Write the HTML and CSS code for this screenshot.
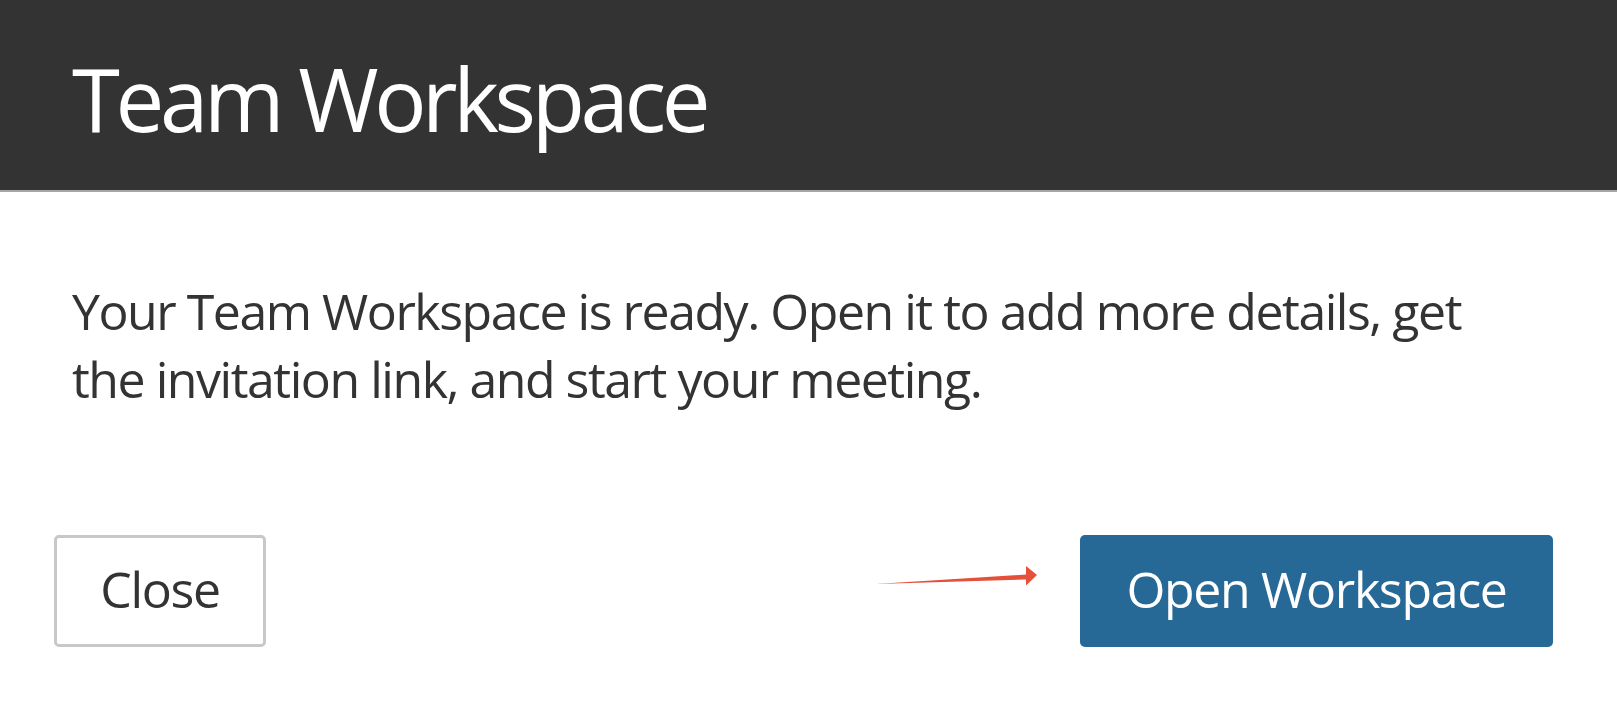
FILE: index.html
```html
<!DOCTYPE html>
<html lang="en">
<head>
<meta charset="utf-8">
<title>Team Workspace</title>
<link rel="stylesheet" href="styles.css">
</head>
<body>
<div class="dialog">
  <header class="dialog-header">
    <h1 class="dialog-title">Team Workspace</h1>
  </header>
  <main class="dialog-body">
    <p class="message">Your Team Workspace is ready. Open it to add more details, get the invitation link, and start your meeting.</p>
  </main>
  <footer class="dialog-footer">
    <button class="btn btn-secondary">Close</button>
    <div class="primary-wrap">
      <svg class="arrow" width="170" height="24" viewBox="0 0 170 24" aria-hidden="true">
        <polygon points="0,18 150,8.5 150,0 161,9 150,19.5 150,13.5" fill="#e4503a"/>
      </svg>
      <button class="btn btn-primary">Open Workspace</button>
    </div>
  </footer>
</div>
</body>
</html>
```

FILE: styles.css
```css
html, body {
  margin: 0;
  padding: 0;
  background: #ffffff;
}

body {
  font-family: "Open Sans", "Noto Sans", "Liberation Sans", sans-serif;
  color: #333333;
}

.dialog {
  width: 1617px;
  height: 710px;
  overflow: hidden;
}

.dialog-header {
  height: 190px;
  background: #333333;
  border-bottom: 2px solid #a6a6a6;
  padding-left: 72px;
  display: flex;
  align-items: center;
  box-sizing: content-box;
}

.dialog-title {
  margin: 0;
  font-weight: 400;
  font-size: 87px;
  letter-spacing: -4.4px;
  color: #ffffff;
  line-height: 1;
  padding-top: 6px;
}

.dialog-body {
  padding: 85px 72px 0 72px;
}

.message {
  margin: 0;
  max-width: 1420px;
  font-size: 50px;
  line-height: 68px;
  letter-spacing: -1.47px;
  color: #333333;
}

.dialog-footer {
  display: flex;
  justify-content: space-between;
  align-items: center;
  padding: 0 64px 0 54px;
  margin-top: 122px;
}

.primary-wrap {
  position: relative;
}

.arrow {
  position: absolute;
  left: -204px;
  top: 31px;
}

.btn {
  font-family: inherit;
  font-size: 50px;
  letter-spacing: -1.3px;
  height: 112px;
  box-sizing: border-box;
  border-radius: 5px;
  cursor: pointer;
  line-height: 1;
  padding-bottom: 6px;
}

.btn-secondary {
  width: 212px;
  background: #ffffff;
  color: #333333;
  border: 3px solid #c8c8c8;
}

.btn-primary {
  width: 473px;
  background: #266896;
  color: #ffffff;
  border: none;
}
```
